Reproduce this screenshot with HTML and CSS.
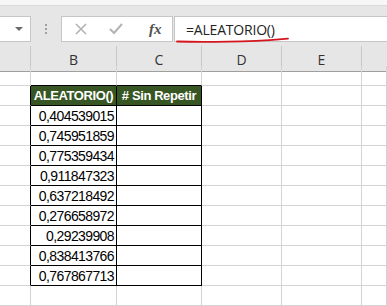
FILE: index.html
```html
<!DOCTYPE html>
<html lang="es">

<head>
    <meta charset="UTF-8">
    <title>ALEATORIO</title>
    <link rel="stylesheet" href="styles.css">
</head>

<body>
    <div class="top-strip"></div>

    <div class="formula-bar">
        <div class="name-box">
            <span class="arrow"></span>
        </div>
        <div class="grip">
            <span></span><span></span><span></span>
        </div>
        <div class="buttons">
            <svg class="icon" width="14" height="14" viewBox="0 0 14 14">
                <path d="M2 2 L12 12 M12 2 L2 12" stroke="#b3b3b3" stroke-width="1.6" fill="none"/>
            </svg>
            <svg class="icon" width="16" height="14" viewBox="0 0 16 14">
                <path d="M2 7 L6 11 L14 2" stroke="#b3b3b3" stroke-width="2" fill="none"/>
            </svg>
            <span class="fx">fx</span>
        </div>
        <div class="formula-input">
            <span class="formula-text">=ALEATORIO()</span>
            <!-- subrayado rojo a mano -->
            <svg class="underline" width="120" height="8" viewBox="0 0 120 8">
                <path d="M1 5.5 C 30 6.2, 60 5.5, 80 4.8 C 95 4.2, 105 3.2, 112 2.6" stroke="#d3161d" stroke-width="1.8" fill="none" stroke-linecap="round"/>
            </svg>
        </div>
    </div>

    <div class="sheet">
        <div class="col-head"></div>
        <div class="col-head">B</div>
        <div class="col-head">C</div>
        <div class="col-head">D</div>
        <div class="col-head">E</div>
        <div class="col-head last"></div>

        <div class="cell"></div>
        <div class="cell above"></div>
        <div class="cell above"></div>
        <div class="cell"></div>
        <div class="cell"></div>
        <div class="cell"></div>

        <div class="cell edge"></div>
        <div class="cell tb th">ALEATORIO()</div>
        <div class="cell tb th">#&nbsp;Sin Repetir</div>
        <div class="cell"></div>
        <div class="cell"></div>
        <div class="cell"></div>
    </div>

    <script>
        const valores = ['0,404539015', '0,745951859', '0,775359434', '0,911847323',
            '0,637218492', '0,276658972', '0,29239908', '0,838413766', '0,767867713'];
        const hoja = document.querySelector('.sheet');

        function celda(clase, texto) {
            const c = document.createElement('div');
            c.className = 'cell ' + clase;
            c.textContent = texto || '';
            hoja.appendChild(c);
        }

        valores.forEach(function (v) {
            celda('edge');
            celda('tb num', v);
            celda('tb');
            celda('');
            celda('');
            celda('');
        });

        // fila de abajo, cortada
        for (let i = 0; i < 6; i++) celda('');
    </script>
</body>

</html>
```

FILE: styles.css
```css
body {
    margin: 0;
    width: 387px;
    height: 306px;
    overflow: hidden;
    background: #ffffff;
    font-family: "Liberation Sans", Arial, sans-serif;
}

.top-strip {
    height: 5px;
    background: #f7f7f7;
    border-bottom: 1px solid #dadada;
}

.formula-bar {
    display: flex;
    align-items: flex-start;
    height: 40px;
    padding-top: 10px;
    box-sizing: border-box;
    background: #e6e6e6;
}

.name-box {
    width: 31px;
    height: 26px;
    box-sizing: border-box;
    background: #fff;
    border: 1px solid #c6c6c6;
    border-left: none;
    display: flex;
    align-items: center;
    justify-content: flex-end;
    padding-right: 7px;
}

.arrow {
    width: 0;
    height: 0;
    border-left: 4px solid transparent;
    border-right: 4px solid transparent;
    border-top: 4px solid #6b6b6b;
}

.grip {
    width: 30px;
    height: 26px;
    display: flex;
    flex-direction: column;
    align-items: center;
    justify-content: center;
    gap: 2px;
}

.grip span {
    width: 2px;
    height: 2px;
    background: #a0a0a0;
}

.buttons {
    width: 112px;
    height: 26px;
    box-sizing: border-box;
    background: #fff;
    border: 1px solid #c6c6c6;
    display: flex;
    align-items: center;
    padding-left: 12px;
    gap: 20px;
}

.fx {
    font-family: "Liberation Serif", "Times New Roman", serif;
    font-style: italic;
    font-weight: bold;
    font-size: 15px;
    color: #505050;
    margin-left: 5px;
}

.formula-input {
    position: relative;
    flex: 1;
    height: 26px;
    margin-left: 1px;
    box-sizing: border-box;
    background: #fff;
    border: 1px solid #c6c6c6;
    border-right: none;
    padding-left: 11px;
    display: flex;
    align-items: center;
}

.formula-text {
    font-family: "Open Sans", "Liberation Sans", sans-serif;
    font-size: 14px;
    color: #222;
    letter-spacing: -0.2px;
}

.underline {
    position: absolute;
    left: 1px;
    top: 19px;
}

.sheet {
    display: grid;
    grid-template-columns: 31px 86px 85px 80px 80px 1fr;
    grid-auto-rows: 20px;
}

.col-head {
    height: 26px;
    box-sizing: border-box;
    background: #e6e6e6;
    border-right: 1px solid #c8c8c8;
    border-bottom: 1px solid #9f9f9f;
    display: flex;
    align-items: center;
    justify-content: center;
    font-family: "Open Sans", "Liberation Sans", sans-serif;
    font-size: 14px;
    color: #333;
    padding-top: 1px;
}

.col-head.last {
    border-right: none;
}

.cell {
    box-sizing: border-box;
    border-right: 1px solid #d4d4d4;
    border-bottom: 1px solid #d4d4d4;
    font-size: 14px;
    line-height: 20px;
    color: #000;
    white-space: nowrap;
    overflow: hidden;
}

.cell.above {
    border-bottom-color: #000;
}

.cell.edge {
    border-right-color: #000;
}

.cell.tb {
    border-right-color: #000;
    border-bottom-color: #000;
}

.cell.th {
    background: #375623;
    color: #fff;
    font-weight: bold;
    font-size: 13px;
    text-align: center;
    letter-spacing: -0.4px;
}

.cell.num {
    text-align: right;
    padding-right: 2px;
    letter-spacing: -0.6px;
}
```
